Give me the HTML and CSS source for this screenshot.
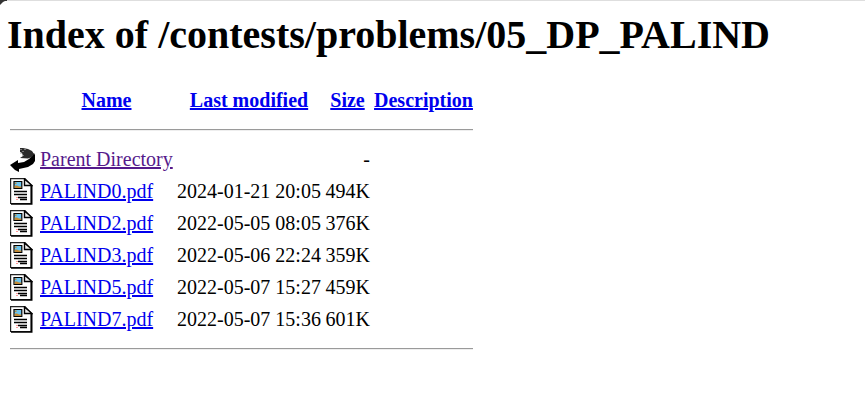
FILE: index.html
```
<!DOCTYPE html>
<html lang="en">
<head>
<meta charset="utf-8">
<title>Index of /contests/problems/05_DP_PALIND</title>
<link rel="stylesheet" href="styles.css">
</head>
<body>
<svg class="corner" viewBox="0 0 7 5"><path d="M0 0H7V1H5L3 2L1 4L0 5Z" fill="#333"/></svg>
<svg class="defs">
<symbol id="back" viewBox="0 0 25 25">
<path d="M24 6L25 8V14L23 17L18 20L9 22V25L5 23L0 18L8 13V16L14 15L19 12L22 9Z" fill="#000"/>
<path d="M10 1H13L18 2L22 4L24 7L22 10L18 11.5L10 11L13 9L12 6L10 5Z" fill="#2a2a2a"/>
<path d="M10 2.5h2M12 4.5h2M10 6.5h2M12 8.5h2M14 2.5h2" stroke="#aaa" stroke-width=".6"/>
</symbol>
<symbol id="doc" viewBox="0 0 23 27">
<path d="M.6.6H15L21 7V25.5H.6Z" fill="#fff" stroke="#222" stroke-width="1.2"/>
<path d="M21.7 8V26H1" fill="none" stroke="#000" stroke-width="1.6"/>
<path d="M14.5 1V7.5H22Z" fill="#eee" stroke="#000" stroke-width="1.4"/>
<path d="M4 3.5H11.8V10.5H4Z" fill="#6cc4ee" stroke="#000" stroke-width="1.2"/>
<path d="M4.6 7.5H7L9 8.5H11.2V9.9H4.6ZM5 4.5H6.5V6H5Z" fill="#c48a35"/>
<path d="M4 13.5H17M4 16.5H17M8 19.5H17M10 21.5H17" stroke="#000" stroke-width="1.5"/>
<path d="M6 19.5H8M6 21.5H8" stroke="#f99" stroke-width="1"/>
</symbol>
</svg>
<h1>Index of /contests/problems/05_DP_PALIND</h1>
<table>
<colgroup><col class="c-icon"><col class="c-name"><col class="c-date"><col class="c-size"><col class="c-desc"></colgroup>
<tr class="head"><th></th><th class="name"><a href="#">Name</a></th><th class="date"><a href="#">Last modified</a></th><th class="size"><a href="#">Size</a></th><th class="desc"><a href="#">Description</a></th></tr>
<tr class="rule first"><td colspan="5"><hr></td></tr>
<tr><td><svg class="back"><use href="#back"/></svg></td><td><a class="visited" href="#">Parent Directory</a></td><td></td><td class="num">-</td><td></td></tr>
<tr><td><svg class="doc"><use href="#doc"/></svg></td><td><a href="#">PALIND0.pdf</a></td><td>2024-01-21 20:05</td><td class="num">494K</td><td></td></tr>
<tr><td><svg class="doc"><use href="#doc"/></svg></td><td><a href="#">PALIND2.pdf</a></td><td>2022-05-05 08:05</td><td class="num">376K</td><td></td></tr>
<tr><td><svg class="doc"><use href="#doc"/></svg></td><td><a href="#">PALIND3.pdf</a></td><td>2022-05-06 22:24</td><td class="num">359K</td><td></td></tr>
<tr><td><svg class="doc"><use href="#doc"/></svg></td><td><a href="#">PALIND5.pdf</a></td><td>2022-05-07 15:27</td><td class="num">459K</td><td></td></tr>
<tr><td><svg class="doc"><use href="#doc"/></svg></td><td><a href="#">PALIND7.pdf</a></td><td>2022-05-07 15:36</td><td class="num">601K</td><td></td></tr>
<tr class="rule"><td colspan="5"><hr></td></tr>
</table>
</body>
</html>
```
FILE: styles.css
```
html { background: #fff; }
body {
  margin: 0;
  padding: 11px 7px 0;
  border-top: 1px solid #dedede;
  font: 20px/24px "Liberation Serif", "Times New Roman", serif;
  color: #000;
}
.corner { position: absolute; top: 0; left: 0; width: 7px; height: 5px; }
.defs { display: none; }
h1 { margin: 0 0 26px; font-size: 40px; line-height: 46px; white-space: nowrap; }
table {
  width: 463px;
  margin-left: 3px;
  table-layout: fixed;
  border-collapse: collapse;
}
.c-icon { width: 30px; }
.c-name { width: 137px; }
.c-date { width: 148px; }
.c-size { width: 49px; }
.c-desc { width: 99px; }
th, td { padding: 0; white-space: nowrap; text-align: left; vertical-align: middle; }
tr { height: 32px; }
th { text-align: center; }
th.name, th.date { padding-right: 4px; }
th.size { padding-right: 4px; }
.num { text-align: right; padding-right: 4px; }
.rule { height: 28px; }
.rule.first { height: 27px; }
hr { margin: 0; border: solid; border-width: 1px 0; border-color: #9a9a9a #eee #eee; }
a { color: #00e; text-decoration: underline; }
a.visited { color: #551a8b; }
.back { display: block; width: 25px; height: 25px; margin-top: 1px; }
.doc { display: block; width: 23px; height: 27px; margin-top: 1px; }
```
